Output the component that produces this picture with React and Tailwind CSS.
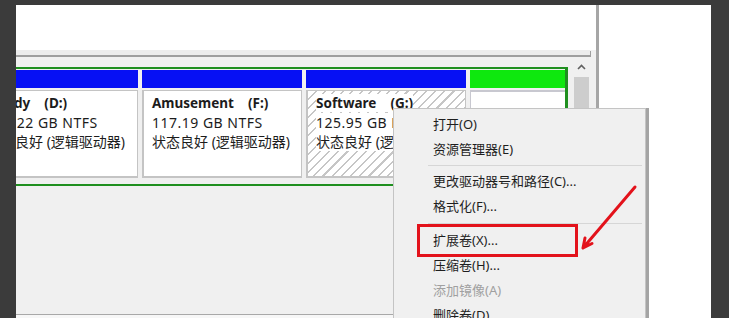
const partitions = [
  {
    name: "Study",
    letter: "(D:)",
    size: "116.22 GB NTFS",
    status: "状态良好 (逻辑驱动器)",
    width: "w-[161px]",
    nameShift: "ml-[5px]",
  },
  {
    name: "Amusement",
    letter: "(F:)",
    size: "117.19 GB NTFS",
    status: "状态良好 (逻辑驱动器)",
    width: "w-[160px]",
    nameShift: "",
  },
  {
    name: "Software",
    letter: "(G:)",
    size: "125.95 GB NTFS",
    status: "状态良好 (逻辑驱动器)",
    width: "w-[160px]",
    nameShift: "",
    selected: true,
  },
];

const menuItems = [
  { label: "打开(O)" },
  { label: "资源管理器(E)" },
  { sep: true, h: "h-[7px]" },
  { label: "更改驱动器号和路径(C)..." },
  { label: "格式化(F)..." },
  { sep: true, h: "h-[9px]" },
  { label: "扩展卷(X)..." },
  { label: "压缩卷(H)..." },
  { label: "添加镜像(A)", disabled: true },
  { label: "删除卷(D)..." },
];

const Partition = ({ p }) => (
  <div className={`flex flex-col ${p.width}`}>
    <div className="mt-px h-[18px] bg-[#0610f4]" />
    <div
      className={`mt-[2px] h-[88px] overflow-hidden border-l-2 border-t border-b-2 border-r border-[#c4c4c4] pl-[8px] pt-[3px] leading-[19px] text-[#1c1c1c] ${
        p.selected
          ? "border-[#b4b4b4] bg-[repeating-linear-gradient(135deg,#ffffff_0px,#ffffff_5px,#c6c6c6_5px,#c6c6c6_6.5px)]"
          : "bg-white"
      }`}
    >
      <div className={`whitespace-nowrap text-[13.5px] font-bold ${p.nameShift}`}>
        <span className={p.selected ? "bg-white" : ""}>
          {p.name}
          <span className="ml-[14px]">{p.letter}</span>
        </span>
      </div>
      <div className="whitespace-nowrap text-[14px] tracking-[0.5px]">
        <span className={p.selected ? "bg-white" : ""}>{p.size}</span>
      </div>
      <div className="whitespace-nowrap text-[14px]">
        <span className={p.selected ? "bg-white" : ""}>{p.status}</span>
      </div>
    </div>
  </div>
);

export default function App() {
  return (
    <div className="relative flex h-[318px] w-[729px] overflow-hidden bg-[#3b3b3b] pl-4 pr-[18px] pt-[5px] font-['Noto_Sans','Noto_Sans_CJK_SC',sans-serif]">
      {/* main disk management column */}
      <div className="flex w-[580px] flex-col overflow-hidden">
        <div className="h-[45px] bg-white" />
        <div className="flex h-[7px] bg-[#f0f0f0]">
          <div className="w-[574px] border-b-2 border-[#9e9e9e] bg-[#ececec]" />
          <div className="mt-[1px] w-px bg-[#9e9e9e]" />
        </div>

        <div className="flex flex-1 border-b border-[#a8a8a8] bg-[#f0f0f0]">
          <div className="w-[552px] shrink-0 pt-[10px]">
            <div className="ml-[-41px] flex w-[593px] gap-[4px] border-y-2 border-l-2 border-r-[3px] border-[#1f8f1f] pb-[6px]">
              {partitions.map((p) => (
                <Partition key={p.name} p={p} />
              ))}
              <div className="flex w-[95px] flex-col">
                <div className="mt-px h-[18px] bg-[#0ee80e]" />
                <div className="mt-[2px] h-[88px] border-t-2 border-l border-[#c8c8d0] bg-white" />
              </div>
            </div>
          </div>

          {/* scrollbar */}
          <div className="ml-[5px] flex w-[17px] flex-col items-center">
            <div className="flex h-[20px] items-center">
              <svg width="9" height="6" viewBox="0 0 9 6">
                <path d="M1 5 L4.5 1.5 L8 5" fill="none" stroke="#606060" strokeWidth="1.6" />
              </svg>
            </div>
            <div className="h-[220px] w-[15px] bg-[#cdcdcd]" />
          </div>
        </div>
        <div className="h-[3px] bg-[#f7f7f7]" />
      </div>

      <div className="w-[3px] bg-[#a6a6a6]" />
      <div className="w-[112px] bg-white" />

      {/* context menu */}
      <div className="absolute left-[393px] top-[108px] h-[220px] w-[253px] border border-[#c4c4c4] bg-[#f0f0f0] pt-[3px] shadow-[3px_0_0_#a4a4a4]">
        {menuItems.map((item, i) =>
          item.sep ? (
            <div key={i} className={`flex items-center ${item.h}`}>
              <div className="ml-[34px] mr-[3px] h-px flex-1 bg-[#d6d6d6]" />
            </div>
          ) : (
            <div
              key={i}
              className={`h-[25px] whitespace-nowrap pl-[39px] text-[13px] leading-[24px] ${
                item.disabled ? "text-[#a0a0a0]" : "text-[#1e1e1e]"
              }`}
            >
              {item.label}
            </div>
          )
        )}
      </div>

      {/* red highlight */}
      <div className="absolute left-[417px] top-[224px] h-[33px] w-[161px] border-[3px] border-[#e3121b]" />

      <svg
        className="pointer-events-none absolute left-0 top-0"
        width="729"
        height="318"
        viewBox="0 0 729 318"
      >
        <path
          d="M635 187 L583 248 M583 248 L592 243.5 M583 248 L585 238"
          fill="none"
          stroke="#e3121b"
          strokeWidth="3"
          strokeLinecap="round"
        />
      </svg>
    </div>
  );
}
